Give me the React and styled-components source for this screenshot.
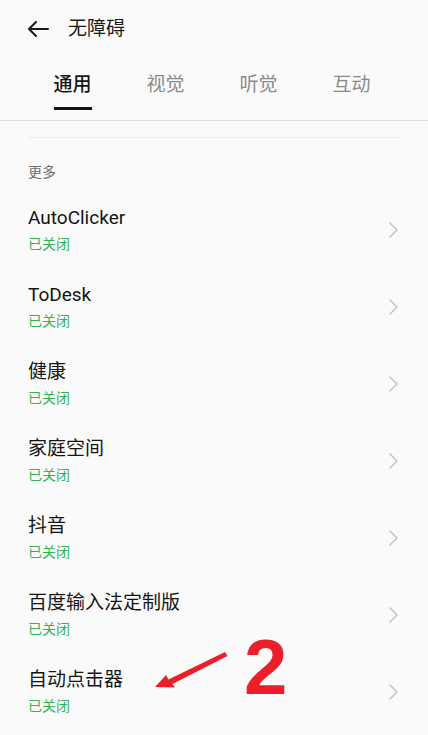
import React from "react";
import styled, { createGlobalStyle } from "styled-components";

const GlobalStyle = createGlobalStyle`
  html, body {
    margin: 0;
    padding: 0;
    background: #fafafa;
  }
  body {
    font-family: Roboto, "Noto Sans CJK SC", sans-serif;
    color: #1a1a1a;
  }
`;

const tabs = ["通用", "视觉", "听觉", "互动"];

const apps = [
  "AutoClicker",
  "ToDesk",
  "健康",
  "家庭空间",
  "抖音",
  "百度输入法定制版",
  "自动点击器",
];

const Page = styled.div`
  position: relative;
  width: 428px;
  min-height: 735px;
  overflow: hidden;
  background: #fafafa;
`;

const Header = styled.div`
  height: 56px;
  box-sizing: border-box;
  padding: 2px 0 0 27px;
  display: flex;
  align-items: center;
`;

const BackIcon = styled.svg`
  width: 22px;
  height: 16px;
  flex-shrink: 0;
`;

const Title = styled.h1`
  margin: 0 0 0 19px;
  font-size: 19px;
  font-weight: 400;
  line-height: 24px;
  color: #1a1a1a;
`;

const TabBar = styled.div`
  display: flex;
  padding: 0 30px 0 26px;
  height: 65px;
  border-bottom: 1px solid #dedede;
  box-sizing: border-box;
`;

const Tab = styled.div`
  flex: 1;
  display: flex;
  flex-direction: column;
  align-items: center;
  padding-top: 17px;
`;

const TabLabel = styled.span`
  font-size: 19px;
  line-height: 24px;
  font-weight: ${({ active }) => (active ? 500 : 400)};
  color: ${({ active }) => (active ? "#141414" : "#8a8a8a")};
`;

const TabLine = styled.div`
  margin-top: 10px;
  width: 38px;
  height: 3px;
  background: ${({ active }) => (active ? "#141414" : "transparent")};
`;

const List = styled.div`
  padding: 0 28px;
`;

const Separator = styled.div`
  margin-top: 16px;
  height: 1px;
  background: #ececec;
`;

const Section = styled.div`
  margin-top: 24px;
  margin-bottom: 9px;
  font-size: 14px;
  line-height: 20px;
  color: #6e6e6e;
`;

const Row = styled.div`
  height: 77px;
  display: flex;
  align-items: center;
  justify-content: space-between;
`;

const RowText = styled.div`
  display: flex;
  flex-direction: column;
  gap: 3px;
`;

const RowTitle = styled.span`
  font-size: 19px;
  line-height: 26px;
  color: #141414;
`;

const RowStatus = styled.span`
  font-size: 14px;
  line-height: 20px;
  color: #35b253;
`;

const Chevron = styled.svg`
  width: 11px;
  height: 18px;
  margin-right: 1px;
`;

const Annotation = styled.svg`
  position: absolute;
  left: 150px;
  top: 645px;
  width: 82px;
  height: 48px;
`;

const Mark = styled.span`
  position: absolute;
  left: 244px;
  top: 628px;
  font-family: "Liberation Sans", Arial, sans-serif;
  font-weight: 700;
  font-size: 78px;
  line-height: 1;
  color: #ea1f29;
`;

export default function App() {
  return (
    <Page>
      <GlobalStyle />
      <Header>
        <BackIcon viewBox="0 0 22 16" fill="none">
          <path
            d="M21 8H2M9 1L2 8l7 7"
            stroke="#1a1a1a"
            strokeWidth="2"
            strokeLinecap="round"
            strokeLinejoin="round"
          />
        </BackIcon>
        <Title>无障碍</Title>
      </Header>

      <TabBar>
        {tabs.map((t, i) => (
          <Tab key={t}>
            <TabLabel active={i === 0}>{t}</TabLabel>
            <TabLine active={i === 0} />
          </Tab>
        ))}
      </TabBar>

      <List>
        <Separator />
        <Section>更多</Section>
        {apps.map((name) => (
          <Row key={name}>
            <RowText>
              <RowTitle>{name}</RowTitle>
              <RowStatus>已关闭</RowStatus>
            </RowText>
            <Chevron viewBox="0 0 11 18" fill="none">
              <path
                d="M1.5 1.5L9 9l-7.5 7.5"
                stroke="#c6c6c6"
                strokeWidth="1.5"
              />
            </Chevron>
          </Row>
        ))}
      </List>

      <Annotation viewBox="0 0 82 48">
        <polygon
          points="5,42 16,30 18.5,34.5 75,7 77.5,11 22.5,39 25,42.5"
          fill="#ea1f29"
        />
      </Annotation>
      <Mark>2</Mark>
    </Page>
  );
}
